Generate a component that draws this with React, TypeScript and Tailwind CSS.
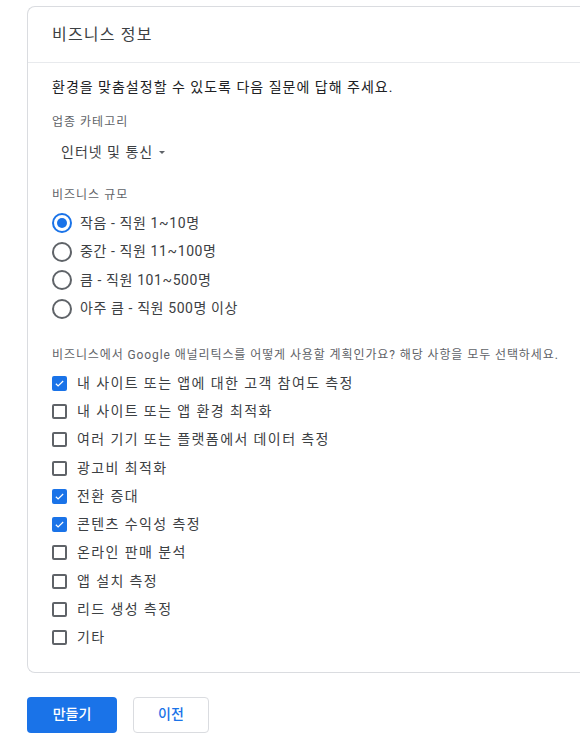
const sizes = [
  { label: "작음 - 직원 1~10명", checked: true },
  { label: "중간 - 직원 11~100명", checked: false },
  { label: "큼 - 직원 101~500명", checked: false },
  { label: "아주 큼 - 직원 500명 이상", checked: false },
];

const uses = [
  { label: "내 사이트 또는 앱에 대한 고객 참여도 측정", checked: true },
  { label: "내 사이트 또는 앱 환경 최적화", checked: false },
  { label: "여러 기기 또는 플랫폼에서 데이터 측정", checked: false },
  { label: "광고비 최적화", checked: false },
  { label: "전환 증대", checked: true },
  { label: "콘텐츠 수익성 측정", checked: true },
  { label: "온라인 판매 분석", checked: false },
  { label: "앱 설치 측정", checked: false },
  { label: "리드 생성 측정", checked: false },
  { label: "기타", checked: false },
];

function Radio({ checked }: { checked: boolean }) {
  return (
    <span
      className={`flex size-[20px] items-center justify-center rounded-full border-2 ${
        checked ? "border-[#1a73e8]" : "border-[#5f6368]"
      }`}
    >
      {checked && <span className="size-[10px] rounded-full bg-[#1a73e8]" />}
    </span>
  );
}

function Checkbox({ checked }: { checked: boolean }) {
  if (checked) {
    return (
      <span className="flex size-[15px] items-center justify-center rounded-[2px] bg-[#1a73e8]">
        <svg width="11" height="11" viewBox="0 0 24 24" fill="none">
          <path d="M4 12.5l5 5L20 6.5" stroke="white" strokeWidth="2.6" />
        </svg>
      </span>
    );
  }
  return <span className="size-[15px] rounded-[2px] border-2 border-[#5f6368]" />;
}

export default function App() {
  return (
    <div className="min-h-screen overflow-hidden bg-white font-['Roboto','Noto_Sans_CJK_KR',sans-serif] text-[#3c4043]">
      <div className="ml-[27px] mt-[6px] w-[600px] rounded-l-lg border border-r-0 border-[#dadce0]">
        <div className="flex h-[56px] items-center border-b border-[#e8eaed] px-[24px] text-[16px] tracking-[1.2px] text-[#3c4043]">
          비즈니스 정보
        </div>
        <div className="px-[24px] pb-[20px] pt-[14px]">
          <p className="text-[14px] leading-[20px] tracking-[1px] text-[#202124]">
            환경을 맞춤설정할 수 있도록 다음 질문에 답해 주세요.
          </p>

          <p className="mt-[17px] text-[12px] leading-[16px] tracking-[1px] text-[#5f6368]">업종 카테고리</p>
          <button className="mt-[12px] flex items-center gap-[4px] pl-[9px] text-[14px] leading-[20px] tracking-[1px] text-[#3c4043]">
            인터넷 및 통신
            <svg width="10" height="10" viewBox="0 0 10 10">
              <path d="M2 4h6L5 7z" fill="#5f6368" />
            </svg>
          </button>

          <p className="mt-[25px] text-[12px] leading-[16px] tracking-[1px] text-[#5f6368]">비즈니스 규모</p>
          <div className="mt-[6px] flex flex-col">
            {sizes.map((s) => (
              <label key={s.label} className="flex h-[28.5px] items-center gap-[8px] text-[14px] tracking-[0.6px]">
                <Radio checked={s.checked} />
                <span>{s.label}</span>
              </label>
            ))}
          </div>

          <p className="mt-[24px] text-[12px] leading-[16px] tracking-[0.9px] text-[#5f6368]">
            비즈니스에서 Google 애널리틱스를 어떻게 사용할 계획인가요? 해당 사항을 모두 선택하세요.
          </p>
          <div className="mt-[6px] flex flex-col">
            {uses.map((u) => (
              <label key={u.label} className="flex h-[28.3px] items-center gap-[10px] text-[14px] tracking-[1.4px]">
                <Checkbox checked={u.checked} />
                <span>{u.label}</span>
              </label>
            ))}
          </div>
        </div>
      </div>

      <div className="ml-[27px] mt-[24px] flex gap-[16px]">
        <button className="h-[36px] w-[90px] rounded-[4px] bg-[#1a73e8] text-[14px] font-medium text-white">
          만들기
        </button>
        <button className="h-[36px] w-[76px] rounded-[4px] border border-[#dadce0] bg-white text-[14px] font-medium text-[#1a73e8]">
          이전
        </button>
      </div>
    </div>
  );
}
